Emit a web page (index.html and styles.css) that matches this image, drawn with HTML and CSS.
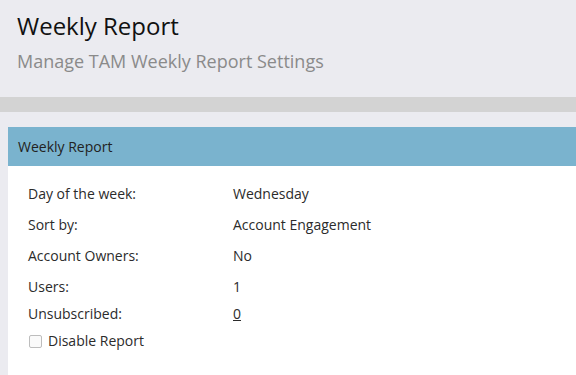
FILE: index.html
```html
<!DOCTYPE html>
<html>
<head>
<meta charset="utf-8">
<link rel="stylesheet" href="styles.css">
</head>
<body>
<header class="page-header">
  <h1 class="title">Weekly Report</h1>
  <p class="subtitle">Manage TAM Weekly Report Settings</p>
</header>
<div class="divider"></div>
<section class="panel">
  <div class="panel-head">Weekly Report</div>
  <div class="panel-body">
    <div class="row"><span class="label">Day of the week:</span><span class="value">Wednesday</span></div>
    <div class="row"><span class="label">Sort by:</span><span class="value">Account Engagement</span></div>
    <div class="row"><span class="label">Account Owners:</span><span class="value">No</span></div>
    <div class="row"><span class="label">Users:</span><span class="value">1</span></div>
    <div class="row compact"><span class="label">Unsubscribed:</span><a class="value link" href="#">0</a></div>
    <label class="row compact check"><span class="box"></span><span>Disable Report</span></label>
  </div>
</section>
</body>
</html>
```
FILE: styles.css
```css
html, body {
  margin: 0;
  padding: 0;
}
body {
  background: #ebebf0;
  font-family: "Open Sans", "DejaVu Sans", sans-serif;
  color: #333;
  height: 375px;
  overflow: hidden;
}
.page-header {
  padding: 10px 17px 0;
}
.title {
  margin: 0;
  font-size: 24px;
  line-height: 32px;
  font-weight: 400;
  color: #111;
}
.subtitle {
  margin: 7px 0 0;
  font-size: 18px;
  line-height: 24px;
  color: #8a8a8a;
}
.divider {
  margin-top: 24px;
  height: 15px;
  background: #d3d3d3;
}
.panel {
  margin: 15px 0 0 8px;
  background: #fff;
  height: 260px;
}
.panel-head {
  height: 39px;
  display: flex;
  align-items: center;
  padding-left: 10px;
  background: #7ab3ce;
  font-size: 14px;
  color: #222;
}
.panel-body {
  padding: 18px 20px 0;
  display: flex;
  flex-direction: column;
}
.row {
  display: flex;
  align-items: center;
  height: 20px;
  font-size: 14px;
  line-height: 20px;
  color: #2b2b2b;
  margin-top: 11px;
}
.row:first-child {
  margin-top: 0;
}
.row.compact {
  margin-top: 7px;
}
.label {
  width: 205px;
}
.link {
  color: #2b2b2b;
  text-decoration: underline;
}
.check {
  gap: 6px;
}
.box {
  width: 11px;
  height: 11px;
  border: 1px solid #bdbdbd;
  border-radius: 2px;
  background: #fafafa;
  margin-left: 1px;
}
```
